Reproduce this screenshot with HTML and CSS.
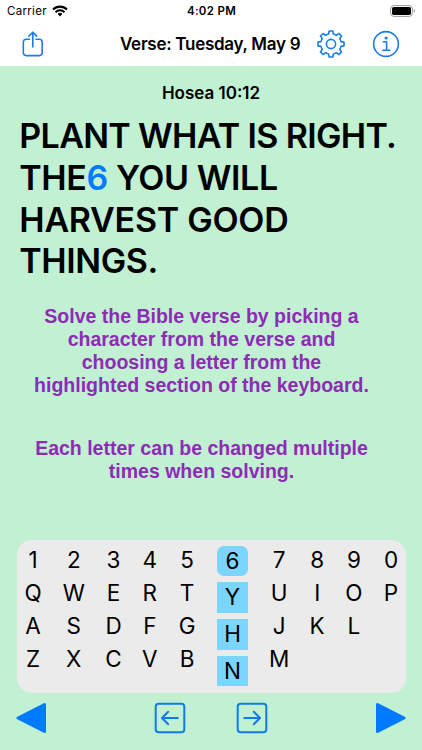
FILE: index.html
```html
<!DOCTYPE html>
<html lang="en">
  <head>
    <meta charset="UTF-8" />
    <meta name="viewport" content="width=device-width, initial-scale=1.0" />
    <title>Bible Verse</title>
    <link rel="stylesheet" href="styles.css">
  </head>
  <body>
    <div class="status">
      <div class="carrier">
        <span>Carrier</span>
        <svg width="16" height="12" viewBox="0 0 16 12">
          <path d="M1 4.5 A10 10 0 0 1 15 4.5" fill="none" stroke="#000" stroke-width="2.1" />
          <path d="M3.5 7.2 A6.4 6.4 0 0 1 12.5 7.2" fill="none" stroke="#000" stroke-width="2" />
          <path d="M8 11.4 L5.6 9 A3.4 3.4 0 0 1 10.4 9 Z" />
        </svg>
      </div>
      <span class="time">4:02 PM</span>
      <svg class="battery" width="26" height="12" viewBox="0 0 26 12">
        <rect x="0.6" y="0.6" width="21.8" height="10.8" rx="3.2" fill="none" stroke="#999" />
        <rect x="2" y="2" width="19" height="8" rx="1.8" />
        <path d="M23.8 4 V8 Q25 7.4 25 6 Q25 4.6 23.8 4 Z" fill="#999" />
      </svg>
    </div>

    <header class="navbar">
      <svg class="share" width="22" height="26" viewBox="0 0 22 26">
        <path d="M7.5 8.3 H4.3 Q1.3 8.3 1.3 11.3 V21.6 Q1.3 24.6 4.3 24.6 H17.2 Q20.2 24.6 20.2 21.6 V11.3 Q20.2 8.3 17.2 8.3 H14" />
        <path d="M10.8 16 V1.3 M6.9 5.1 L10.8 1.2 L14.7 5.1" />
      </svg>
      <h1>Verse: Tuesday, May 9</h1>
      <svg class="gear" width="28" height="28" viewBox="-14 -14 28 28">
        <path d="M-1.84 -13 H1.84 L2.4 -10 Q4 -9.6 5.4 -8.7 L7.94 -10.54 L10.54 -7.94 L8.7 -5.4 Q9.6 -4 10 -2.4 L13 -1.84 V1.84 L10 2.4 Q9.6 4 8.7 5.4 L10.54 7.94 L7.94 10.54 L5.4 8.7 Q4 9.6 2.4 10 L1.84 13 H-1.84 L-2.4 10 Q-4 9.6 -5.4 8.7 L-7.94 10.54 L-10.54 7.94 L-8.7 5.4 Q-9.6 4 -10 2.4 L-13 1.84 V-1.84 L-10 -2.4 Q-9.6 -4 -8.7 -5.4 L-10.54 -7.94 L-7.94 -10.54 L-5.4 -8.7 Q-4 -9.6 -2.4 -10 Z" />
        <circle r="4.6" />
      </svg>
      <svg class="info" width="28" height="28" viewBox="-14 -14 28 28">
        <circle r="12.4" />
        <path d="M-2.6 -2.3 H0.6 V6.2 M-3.2 6.2 H3.9" />
        <circle class="dot" cx="0.1" cy="-6" r="1.6" />
      </svg>
    </header>

    <main>
      <h2>Hosea 10:12</h2>
      <p class="verse">
        <span class="tight">PLANT WHAT IS RIGHT.</span><br />
        <span>THE<b>6</b> YOU WILL</span><br />
        <span class="loose">HARVEST GOOD</span><br />
        <span>THINGS.</span>
      </p>

      <div class="help">
        <p>
          Solve the Bible verse by picking a<br />
          character from the verse and<br />
          choosing a letter from the<br />
          highlighted section of the keyboard.
        </p>
        <p>
          Each letter can be changed multiple<br />
          times when solving.
        </p>
      </div>

      <div class="keyboard">
        <div class="col"><span>1</span><span>Q</span><span>A</span><span>Z</span></div>
        <div class="col"><span>2</span><span>W</span><span>S</span><span>X</span></div>
        <div class="col"><span>3</span><span>E</span><span>D</span><span>C</span></div>
        <div class="col"><span>4</span><span>R</span><span>F</span><span>V</span></div>
        <div class="col"><span>5</span><span>T</span><span>G</span><span>B</span></div>
        <div class="col active"><span class="picked">6</span><span>Y</span><span>H</span><span>N</span></div>
        <div class="col"><span>7</span><span>U</span><span>J</span><span>M</span></div>
        <div class="col"><span>8</span><span>I</span><span>K</span></div>
        <div class="col"><span>9</span><span>O</span><span>L</span></div>
        <div class="col"><span>0</span><span>P</span></div>
      </div>

      <div class="controls">
        <svg class="solid" width="31" height="32" viewBox="0 0 31 32">
          <path d="M2 16 L28.5 2.5 V29.5 Z" />
        </svg>
        <div class="steps">
          <svg class="outline" width="32" height="32" viewBox="0 0 32 32">
            <rect x="1.7" y="1.7" width="28.6" height="28.6" rx="3" />
            <path d="M23.8 16 H8.3 M14.2 9.8 L8 16 L14.2 22.2" />
          </svg>
          <svg class="outline" width="32" height="32" viewBox="0 0 32 32">
            <rect x="1.7" y="1.7" width="28.6" height="28.6" rx="3" />
            <path d="M8.2 16 H23.7 M17.8 9.8 L24 16 L17.8 22.2" />
          </svg>
        </div>
        <svg class="solid" width="31" height="32" viewBox="0 0 31 32">
          <path d="M29 16 L2.5 2.5 V29.5 Z" />
        </svg>
      </div>
    </main>
  </body>
</html>
```
FILE: styles.css
```css
* {
  box-sizing: border-box;
}
body {
  margin: 0;
  height: 750px;
  display: flex;
  flex-direction: column;
  overflow: hidden;
  background: #fff;
  color: #000;
  font-family: Inter, "Liberation Sans", sans-serif;
}
h1,
h2,
p {
  margin: 0;
}
svg {
  display: block;
  flex: none;
}
.status {
  display: grid;
  grid-template-columns: 1fr auto 1fr;
  align-items: center;
  height: 22px;
  padding: 0 6px 0 7px;
  font-size: 11.5px;
}
.carrier {
  display: flex;
  align-items: center;
  gap: 5px;
  letter-spacing: 0.3px;
}
.time {
  font-weight: 600;
  letter-spacing: 0.3px;
}
.battery {
  justify-self: end;
}
.navbar {
  display: flex;
  align-items: center;
  height: 43.5px;
  padding-left: 22px;
}
.navbar svg {
  fill: none;
  stroke: #1a7cf0;
  stroke-width: 1.6;
  stroke-linejoin: round;
  stroke-linecap: round;
}
.navbar .dot {
  fill: #1a7cf0;
  stroke: none;
}
h1 {
  margin-left: 76px;
  width: 181px;
  font-size: 17px;
  font-weight: 600;
  white-space: nowrap;
  letter-spacing: -0.28px;
}
.gear {
  margin-left: 15.5px;
}
.info {
  margin-left: 27px;
}
main {
  height: 684.5px;
  background: #c2f0d3;
}
h2 {
  padding-top: 17.5px;
  font-size: 17px;
  line-height: 21px;
  font-weight: 600;
  text-align: center;
}
.verse {
  margin: 11.1px 0 0 19.3px;
  font-size: 34px;
  line-height: 41.8px;
  font-weight: 600;
  white-space: nowrap;
  letter-spacing: -0.42px;
}
.verse b {
  color: #007aff;
  font-weight: 600;
}
.verse .tight {
  letter-spacing: -0.66px;
}
.verse .loose {
  letter-spacing: -0.27px;
}
.help {
  width: 403px;
  margin-top: 22.7px;
  color: #8e2bb5;
  font-family: "Liberation Sans", Arial, sans-serif;
  font-size: 19.5px;
  line-height: 23px;
  font-weight: 700;
  text-align: center;
  white-space: nowrap;
}
.help p + p {
  margin-top: 40px;
}
.keyboard {
  display: grid;
  grid-template-columns: 17px 21.5px 15px 14.5px 17px 30.7px 19.5px 13.5px 17px 14px;
  justify-content: space-between;
  width: 389px;
  height: 153px;
  margin: 57px 0 0 17px;
  padding: 3.5px 8px 0 7.5px;
  border-radius: 15px;
  background: #ebebeb;
  font-size: 22.5px;
}
.col {
  display: flex;
  flex-direction: column;
  align-items: center;
}
.col span {
  height: 33px;
  line-height: 33px;
}
.active {
  gap: 6px;
  padding-top: 2.2px;
}
.active span {
  width: 30.7px;
  height: 30.7px;
  line-height: 30.7px;
  text-align: center;
  background: #7ad5ff;
}
.active .picked {
  border-radius: 7px;
}
.controls {
  display: flex;
  justify-content: space-between;
  padding: 9px 16px 0;
}
.steps {
  display: flex;
  gap: 49.3px;
}
.solid {
  fill: #007aff;
  stroke: #007aff;
  stroke-width: 3;
  stroke-linejoin: round;
}
.outline {
  fill: none;
  stroke: #0f7bea;
  stroke-width: 2;
  stroke-linecap: round;
  stroke-linejoin: round;
}
```
